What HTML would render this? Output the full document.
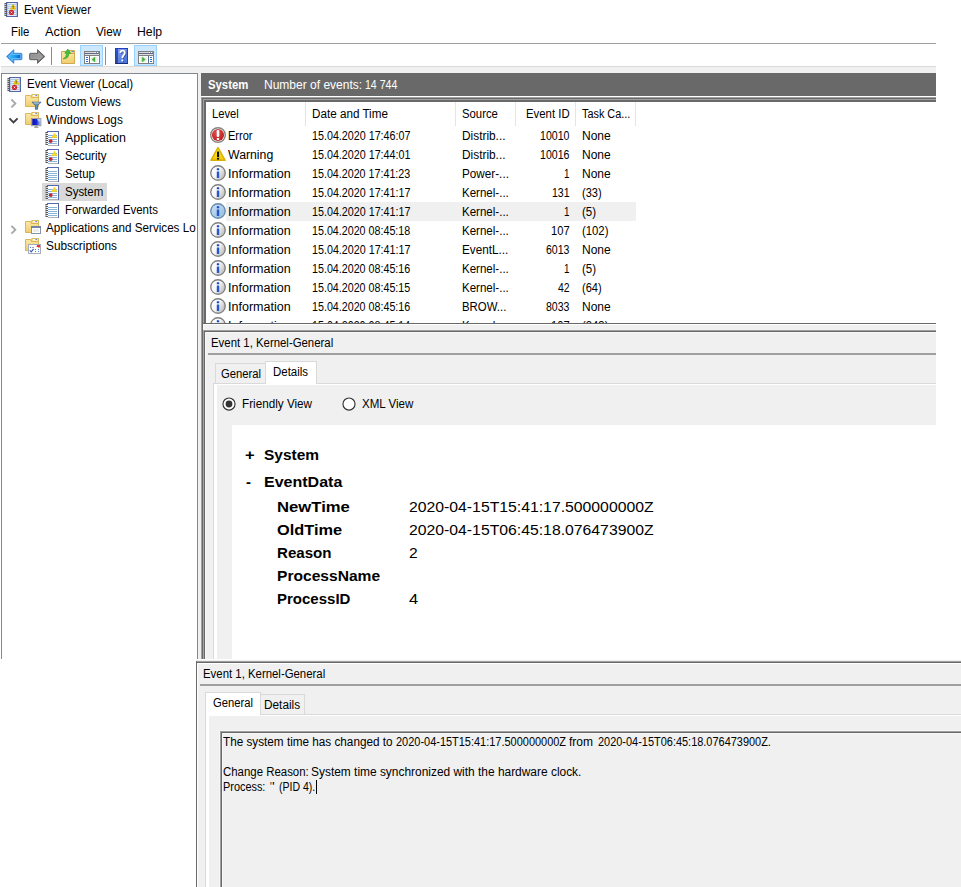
<!DOCTYPE html><html><head><meta charset="utf-8"><title>Event Viewer</title><style>html,body{margin:0;padding:0;background:#fff}
body{width:961px;height:887px;position:relative;overflow:hidden;font-family:"Liberation Sans",sans-serif}
.t{position:absolute;white-space:pre;line-height:30px;height:30px;transform-origin:0 0;color:#000;font-size:12px}
</style></head><body><svg width="0" height="0" style="position:absolute"><defs>
<linearGradient id="gFold" x1="0" y1="0" x2="0" y2="1"><stop offset="0" stop-color="#fbe9a6"/><stop offset="1" stop-color="#f0cd6c"/></linearGradient>
<linearGradient id="gBack" x1="0" y1="0" x2="1" y2="0"><stop offset="0" stop-color="#48b8fa"/><stop offset="0.5" stop-color="#18a0f4"/><stop offset="1" stop-color="#0660c8"/></linearGradient>
<linearGradient id="gFwd" x1="0" y1="0" x2="1" y2="1"><stop offset="0" stop-color="#8a8a8a"/><stop offset="1" stop-color="#a8a8a8"/></linearGradient>
<radialGradient id="gErr" cx="0.4" cy="0.3" r="0.8"><stop offset="0" stop-color="#e05050"/><stop offset="1" stop-color="#b81818"/></radialGradient>
<linearGradient id="gWarn" x1="0" y1="0" x2="0" y2="1"><stop offset="0" stop-color="#fff24a"/><stop offset="1" stop-color="#f2c600"/></linearGradient>
<linearGradient id="gInfo" x1="0" y1="0.2" x2="1" y2="0.8"><stop offset="0" stop-color="#ffffff"/><stop offset="0.45" stop-color="#f6f6f6"/><stop offset="1" stop-color="#b4b4b4"/></linearGradient>
<linearGradient id="gInfoS" x1="0" y1="0" x2="1" y2="1"><stop offset="0" stop-color="#cfe4f6"/><stop offset="1" stop-color="#8fb8dc"/></linearGradient>
<linearGradient id="gHelp" x1="0" y1="0" x2="0.6" y2="1"><stop offset="0" stop-color="#869cee"/><stop offset="0.5" stop-color="#6688e6"/><stop offset="1" stop-color="#4876e0"/></linearGradient><linearGradient id="gHelpS" x1="0" y1="0" x2="0" y2="1"><stop offset="0" stop-color="#2456d6"/><stop offset="1" stop-color="#32488c"/></linearGradient>
<linearGradient id="gMon" x1="0" y1="0" x2="1" y2="0"><stop offset="0" stop-color="#0a0ab8"/><stop offset="0.55" stop-color="#1a2ad8"/><stop offset="1" stop-color="#9cc0f8"/></linearGradient>
</defs></svg><div style="position:absolute;left:1px;top:66px;width:935px;height:593px;background:#f0f0f0;"></div><div style="position:absolute;left:1px;top:43px;width:935px;height:1px;background:#a0a0a0;"></div><div style="position:absolute;left:1px;top:66px;width:935px;height:1px;background:#dadada;"></div><div style="position:absolute;left:80px;top:45px;width:23px;height:21px;background:#cce8ff;box-sizing:border-box;border:1px solid #99d1ff"></div><div style="position:absolute;left:134px;top:45px;width:23px;height:21px;background:#cce8ff;box-sizing:border-box;border:1px solid #99d1ff"></div><div style="position:absolute;left:51px;top:47px;width:1px;height:18px;background:#8c8c8c;"></div><div style="position:absolute;left:105px;top:47px;width:1px;height:18px;background:#8c8c8c;"></div><svg style="position:absolute;left:5.5px;top:49px" width="17" height="15" viewBox="0 0 17 15"><path d="M0.6 7.5 L7.8 0.7 L7.8 4.3 L15 4.3 Q15.9 4.3 15.9 5.2 L15.9 9.8 Q15.9 10.7 15 10.7 L7.8 10.7 L7.8 14.3 Z" fill="#3a94e4" stroke="#2f86dc" stroke-width="0.9" stroke-linejoin="round"/><path d="M2.6 7.5 L6.7 3.6 L6.7 5.5 L14.7 5.5 L14.7 9.5 L6.7 9.5 L6.7 11.4 Z" fill="url(#gBack)" stroke="#86ccfc" stroke-width="0.7" stroke-linejoin="round"/></svg><svg style="position:absolute;left:28.5px;top:49px" width="17" height="15" viewBox="0 0 17 15"><path d="M15.8 7.5 L8.5 0.7 L8.5 4.3 L1.5 4.3 Q0.6 4.3 0.6 5.2 L0.6 9.8 Q0.6 10.7 1.5 10.7 L8.5 10.7 L8.5 14.3 Z" fill="#707070" stroke="#5c5c5c" stroke-width="0.9" stroke-linejoin="round"/><path d="M13.8 7.5 L9.6 3.6 L9.6 5.5 L1.8 5.5 L1.8 9.5 L9.6 9.5 L9.6 11.4 Z" fill="url(#gFwd)" stroke="#a8a8a8" stroke-width="0.7" stroke-linejoin="round"/></svg><svg style="position:absolute;left:61px;top:48px" width="15" height="16" viewBox="0 0 15 16"><path d="M0.5 3.5 L0.5 15.5 L13.5 15.5 L13.5 5.5 L6.5 5.5 L5.5 3.5 Z" fill="url(#gFold)" stroke="#d0a850" stroke-width="1"/><path d="M7.5 2.5 L13.5 2.5 L13.5 5.5 L6.8 5.5 Z" fill="#f5dc90" stroke="#d0a850" stroke-width="1"/><rect x="10.5" y="3" width="2.4" height="1.1" fill="#5a9ae8"/><path d="M2.2 10.8 Q5.6 9.8 5.6 5.2 L3.8 5.2 L6.8 1 L9.6 5.2 L7.8 5.2 Q7.8 10.8 2.2 10.8Z" fill="#3cc43c" stroke="#1f9a24" stroke-width="0.6"/></svg><svg style="position:absolute;left:84px;top:51px" width="16" height="13" viewBox="0 0 16 13"><g shape-rendering="crispEdges"><rect x="0" y="0" width="16" height="13" fill="#808080"/><rect x="1" y="1" width="14" height="1" fill="#d9d9d9"/><rect x="11" y="1" width="1" height="1" fill="#ffffff"/><rect x="13" y="1" width="1" height="1" fill="#ffffff"/><rect x="12" y="1" width="1" height="1" fill="#8a93a8"/><rect x="14" y="1" width="1" height="1" fill="#a0a0a0"/><rect x="1" y="2" width="14" height="1" fill="#5c6b8a"/><rect x="1" y="3" width="14" height="1" fill="#dedede"/><rect x="1" y="5" width="4" height="7" fill="#ffffff"/><rect x="5" y="5" width="1" height="7" fill="#5c6b8a"/><rect x="6" y="5" width="9" height="7" fill="#ffffff"/><rect x="7" y="6" width="7" height="5" fill="#f0f0f0"/><rect x="2" y="6" width="2" height="1" fill="#2f6fc4"/><rect x="2" y="8" width="2" height="1" fill="#2f6fc4"/><rect x="2" y="10" width="2" height="1" fill="#2f6fc4"/></g><path d="M11 6 L11 11 L7.9 8.5 Z" fill="#3cb034" stroke="#3cb034" stroke-width="0.4" stroke-linejoin="round"/></svg><svg style="position:absolute;left:115px;top:48px" width="13" height="16" viewBox="0 0 13 16"><rect x="0" y="0" width="13" height="16" fill="#2442b8"/><rect x="1" y="1" width="2" height="14" fill="url(#gHelpS)"/><rect x="3" y="1" width="9" height="14" fill="url(#gHelp)"/><rect x="0" y="15" width="13" height="1" fill="#1c2c78"/><path d="M5.3 4.9 Q5.4 2.7 7.6 2.7 Q9.8 2.7 9.8 4.8 Q9.8 6.3 8.4 7.5 Q7.3 8.5 7.3 10.2" transform="translate(0.8,0.7)" fill="none" stroke="#28387c" stroke-opacity="0.65" stroke-width="1.8"/><circle cx="8.1" cy="13" r="1.1" fill="#28387c" fill-opacity="0.65"/><path d="M5.3 4.9 Q5.4 2.7 7.6 2.7 Q9.8 2.7 9.8 4.8 Q9.8 6.3 8.4 7.5 Q7.3 8.5 7.3 10.2" fill="none" stroke="#fff" stroke-width="1.75"/><circle cx="7.3" cy="12.5" r="1.1" fill="#fff"/></svg><svg style="position:absolute;left:138px;top:51px" width="16" height="13" viewBox="0 0 16 13"><g shape-rendering="crispEdges"><rect x="0" y="0" width="16" height="13" fill="#808080"/><rect x="1" y="1" width="14" height="1" fill="#d9d9d9"/><rect x="11" y="1" width="1" height="1" fill="#ffffff"/><rect x="13" y="1" width="1" height="1" fill="#ffffff"/><rect x="12" y="1" width="1" height="1" fill="#8a93a8"/><rect x="14" y="1" width="1" height="1" fill="#a0a0a0"/><rect x="1" y="2" width="14" height="1" fill="#5c6b8a"/><rect x="1" y="3" width="14" height="1" fill="#dedede"/><rect x="1" y="5" width="9" height="7" fill="#ffffff"/><rect x="2" y="6" width="7" height="5" fill="#f0f0f0"/><rect x="10" y="5" width="1" height="7" fill="#5c6b8a"/><rect x="11" y="5" width="4" height="7" fill="#ffffff"/><rect x="12" y="6" width="2" height="1" fill="#2f6fc4"/><rect x="12" y="8" width="2" height="1" fill="#2f6fc4"/><rect x="12" y="10" width="2" height="1" fill="#2f6fc4"/></g><path d="M4.2 6 L4.2 11 L7.3 8.5 Z" fill="#3cb034" stroke="#3cb034" stroke-width="0.4" stroke-linejoin="round"/></svg><svg style="position:absolute;left:4px;top:2px" width="14" height="15" viewBox="0 0 14 15"><g shape-rendering="crispEdges"><rect x="2" y="0" width="12" height="15" fill="#5468a8"/><rect x="3" y="1" width="10" height="13" fill="#b4c8ec"/><rect x="4" y="1" width="8" height="1" fill="#e4ecfa"/><rect x="4" y="3" width="8" height="1" fill="#e4ecfa"/><rect x="4" y="5" width="8" height="1" fill="#e4ecfa"/><rect x="4" y="7" width="8" height="1" fill="#e4ecfa"/><rect x="4" y="9" width="8" height="1" fill="#e4ecfa"/><rect x="4" y="11" width="8" height="1" fill="#e4ecfa"/><rect x="4" y="13" width="8" height="1" fill="#e4ecfa"/><rect x="1" y="1" width="2" height="1" fill="#5a5a5a"/><rect x="0" y="1" width="1" height="1" fill="#a4a4a4"/><rect x="0" y="1.0" width="0" height="0" fill="#fff"/><rect x="1" y="3" width="2" height="1" fill="#5a5a5a"/><rect x="0" y="3" width="1" height="1" fill="#a4a4a4"/><rect x="0" y="3.0" width="0" height="0" fill="#fff"/><rect x="1" y="5" width="2" height="1" fill="#5a5a5a"/><rect x="0" y="5" width="1" height="1" fill="#a4a4a4"/><rect x="0" y="5.0" width="0" height="0" fill="#fff"/><rect x="1" y="7" width="2" height="1" fill="#5a5a5a"/><rect x="0" y="7" width="1" height="1" fill="#a4a4a4"/><rect x="0" y="7.0" width="0" height="0" fill="#fff"/><rect x="1" y="9" width="2" height="1" fill="#5a5a5a"/><rect x="0" y="9" width="1" height="1" fill="#a4a4a4"/><rect x="0" y="9.0" width="0" height="0" fill="#fff"/><rect x="1" y="11" width="2" height="1" fill="#5a5a5a"/><rect x="0" y="11" width="1" height="1" fill="#a4a4a4"/><rect x="0" y="11.0" width="0" height="0" fill="#fff"/><rect x="1" y="13" width="2" height="1" fill="#5a5a5a"/><rect x="0" y="13" width="1" height="1" fill="#a4a4a4"/><rect x="0" y="13.0" width="0" height="0" fill="#fff"/><rect x="0" y="2" width="2" height="1" fill="#c4c4c4"/><rect x="0" y="4" width="2" height="1" fill="#c4c4c4"/><rect x="0" y="6" width="2" height="1" fill="#c4c4c4"/><rect x="0" y="8" width="2" height="1" fill="#c4c4c4"/><rect x="0" y="10" width="2" height="1" fill="#c4c4c4"/><rect x="0" y="12" width="2" height="1" fill="#c4c4c4"/></g><path d="M9.1 2.4 L11.8 7.1 L6.5 7.1 Z" fill="#f2d018" stroke="#e8c010" stroke-width="0.9" stroke-linejoin="round"/><rect x="8.7" y="3.7" width="0.9" height="1.6" fill="#3a3a18"/><rect x="8.7" y="5.8" width="0.9" height="0.8" fill="#3a3a18"/><circle cx="7.5" cy="10.4" r="2.55" fill="#cc2028"/><path d="M6.7 9.6 L8.3 11.2 M8.3 9.6 L6.7 11.2" stroke="#fff" stroke-width="0.9"/></svg><div style="position:absolute;left:1px;top:73px;width:197px;height:586px;background:#ffffff;box-sizing:border-box;border:1px solid #828790;border-bottom:none"></div><div style="position:absolute;left:42px;top:183px;width:65px;height:18px;background:#d9d9d9;"></div><svg style="position:absolute;left:7px;top:77px" width="14" height="15" viewBox="0 0 14 15"><g shape-rendering="crispEdges"><rect x="2" y="0" width="12" height="15" fill="#5468a8"/><rect x="3" y="1" width="10" height="13" fill="#b4c8ec"/><rect x="4" y="1" width="8" height="1" fill="#e4ecfa"/><rect x="4" y="3" width="8" height="1" fill="#e4ecfa"/><rect x="4" y="5" width="8" height="1" fill="#e4ecfa"/><rect x="4" y="7" width="8" height="1" fill="#e4ecfa"/><rect x="4" y="9" width="8" height="1" fill="#e4ecfa"/><rect x="4" y="11" width="8" height="1" fill="#e4ecfa"/><rect x="4" y="13" width="8" height="1" fill="#e4ecfa"/><rect x="1" y="1" width="2" height="1" fill="#5a5a5a"/><rect x="0" y="1" width="1" height="1" fill="#a4a4a4"/><rect x="0" y="1.0" width="0" height="0" fill="#fff"/><rect x="1" y="3" width="2" height="1" fill="#5a5a5a"/><rect x="0" y="3" width="1" height="1" fill="#a4a4a4"/><rect x="0" y="3.0" width="0" height="0" fill="#fff"/><rect x="1" y="5" width="2" height="1" fill="#5a5a5a"/><rect x="0" y="5" width="1" height="1" fill="#a4a4a4"/><rect x="0" y="5.0" width="0" height="0" fill="#fff"/><rect x="1" y="7" width="2" height="1" fill="#5a5a5a"/><rect x="0" y="7" width="1" height="1" fill="#a4a4a4"/><rect x="0" y="7.0" width="0" height="0" fill="#fff"/><rect x="1" y="9" width="2" height="1" fill="#5a5a5a"/><rect x="0" y="9" width="1" height="1" fill="#a4a4a4"/><rect x="0" y="9.0" width="0" height="0" fill="#fff"/><rect x="1" y="11" width="2" height="1" fill="#5a5a5a"/><rect x="0" y="11" width="1" height="1" fill="#a4a4a4"/><rect x="0" y="11.0" width="0" height="0" fill="#fff"/><rect x="1" y="13" width="2" height="1" fill="#5a5a5a"/><rect x="0" y="13" width="1" height="1" fill="#a4a4a4"/><rect x="0" y="13.0" width="0" height="0" fill="#fff"/><rect x="0" y="2" width="2" height="1" fill="#c4c4c4"/><rect x="0" y="4" width="2" height="1" fill="#c4c4c4"/><rect x="0" y="6" width="2" height="1" fill="#c4c4c4"/><rect x="0" y="8" width="2" height="1" fill="#c4c4c4"/><rect x="0" y="10" width="2" height="1" fill="#c4c4c4"/><rect x="0" y="12" width="2" height="1" fill="#c4c4c4"/></g><path d="M9.1 2.4 L11.8 7.1 L6.5 7.1 Z" fill="#f2d018" stroke="#e8c010" stroke-width="0.9" stroke-linejoin="round"/><rect x="8.7" y="3.7" width="0.9" height="1.6" fill="#3a3a18"/><rect x="8.7" y="5.8" width="0.9" height="0.8" fill="#3a3a18"/><circle cx="7.5" cy="10.4" r="2.55" fill="#cc2028"/><path d="M6.7 9.6 L8.3 11.2 M8.3 9.6 L6.7 11.2" stroke="#fff" stroke-width="0.9"/></svg><svg style="position:absolute;left:25px;top:94px" width="17" height="17" viewBox="0 0 17 17"><path d="M0.5 1.5 L0.5 12.5 L13.5 12.5 L13.5 3.5 L6.5 3.5 L5.5 1.5 Z" fill="url(#gFold)" stroke="#d9b65a" stroke-width="1"/><path d="M6.8 0.5 L13.5 0.5 L13.5 3.5 L6.5 3.5 Z" fill="#f7e3a0" stroke="#d9b65a" stroke-width="1"/><rect x="8" y="0.9" width="4.5" height="1.4" fill="#ffffff"/><rect x="10.3" y="1.1" width="1.8" height="0.9" fill="#3f8ee8"/><path d="M7 8.2 L16 8.2 L12.6 11.6 L12.6 15.2 L10.4 15.2 L10.4 11.6 Z" fill="#6a90b8" stroke="#44668e" stroke-width="0.9"/><path d="M8.6 9 L14.4 9" stroke="#cfe0f0" stroke-width="0.8"/></svg><svg style="position:absolute;left:25px;top:112px" width="17" height="17" viewBox="0 0 17 17"><path d="M0.5 1.5 L0.5 12.5 L13.5 12.5 L13.5 3.5 L6.5 3.5 L5.5 1.5 Z" fill="url(#gFold)" stroke="#d9b65a" stroke-width="1"/><path d="M6.8 0.5 L13.5 0.5 L13.5 3.5 L6.5 3.5 Z" fill="#f7e3a0" stroke="#d9b65a" stroke-width="1"/><rect x="8" y="0.9" width="4.5" height="1.4" fill="#ffffff"/><rect x="10.3" y="1.1" width="1.8" height="0.9" fill="#3f8ee8"/><rect x="6.5" y="6.3" width="9.5" height="7.6" fill="#b8b8b8" stroke="#8a8a8a" stroke-width="0.6"/><rect x="7.3" y="7" width="8" height="6" fill="url(#gMon)"/><path d="M12 7 L15.3 7 L15.3 10 Q13 10 12 7Z" fill="#b8d4fa" opacity="0.9"/><path d="M9.2 15.4 L13.4 15.4 M10.2 14.4 L12.4 14.4" stroke="#8a8a8a" stroke-width="0.9"/></svg><svg style="position:absolute;left:45px;top:131px" width="14" height="15" viewBox="0 0 14 15"><g shape-rendering="crispEdges"><rect x="3" y="1" width="10" height="13" fill="#ffffff"/><rect x="2" y="0" width="12" height="1" fill="#5468b0"/><rect x="13" y="0" width="1" height="15" fill="#5a6aa8"/><rect x="3" y="14" width="10" height="1" fill="#aeb2bc"/><rect x="3" y="4" width="9" height="1" fill="#8ab4d8"/><rect x="3" y="6" width="9" height="1" fill="#8ab4d8"/><rect x="3" y="8" width="9" height="1" fill="#8ab4d8"/><rect x="3" y="10" width="9" height="1" fill="#8ab4d8"/><rect x="3" y="12" width="9" height="1" fill="#8ab4d8"/><rect x="1" y="1" width="2" height="1" fill="#5a5a5a"/><rect x="0" y="1" width="1" height="1" fill="#a4a4a4"/><rect x="0" y="1.0" width="0" height="0" fill="#fff"/><rect x="1" y="3" width="2" height="1" fill="#5a5a5a"/><rect x="0" y="3" width="1" height="1" fill="#a4a4a4"/><rect x="0" y="3.0" width="0" height="0" fill="#fff"/><rect x="1" y="5" width="2" height="1" fill="#5a5a5a"/><rect x="0" y="5" width="1" height="1" fill="#a4a4a4"/><rect x="0" y="5.0" width="0" height="0" fill="#fff"/><rect x="1" y="7" width="2" height="1" fill="#5a5a5a"/><rect x="0" y="7" width="1" height="1" fill="#a4a4a4"/><rect x="0" y="7.0" width="0" height="0" fill="#fff"/><rect x="1" y="9" width="2" height="1" fill="#5a5a5a"/><rect x="0" y="9" width="1" height="1" fill="#a4a4a4"/><rect x="0" y="9.0" width="0" height="0" fill="#fff"/><rect x="1" y="11" width="2" height="1" fill="#5a5a5a"/><rect x="0" y="11" width="1" height="1" fill="#a4a4a4"/><rect x="0" y="11.0" width="0" height="0" fill="#fff"/><rect x="1" y="13" width="2" height="1" fill="#5a5a5a"/><rect x="0" y="13" width="1" height="1" fill="#a4a4a4"/><rect x="0" y="13.0" width="0" height="0" fill="#fff"/><rect x="0" y="2" width="2" height="1" fill="#c4c4c4"/><rect x="0" y="4" width="2" height="1" fill="#c4c4c4"/><rect x="0" y="6" width="2" height="1" fill="#c4c4c4"/><rect x="0" y="8" width="2" height="1" fill="#c4c4c4"/><rect x="0" y="10" width="2" height="1" fill="#c4c4c4"/><rect x="0" y="12" width="2" height="1" fill="#c4c4c4"/></g><path d="M9.5 2.3 L11.9 6.6 L7.1 6.6 Z" fill="#f8dc28" stroke="#f2d020" stroke-width="0.8" stroke-linejoin="round"/><circle cx="5.75" cy="10.05" r="1.9" fill="#c8242c"/></svg><svg style="position:absolute;left:45px;top:149px" width="14" height="15" viewBox="0 0 14 15"><g shape-rendering="crispEdges"><rect x="3" y="1" width="10" height="13" fill="#ffffff"/><rect x="2" y="0" width="12" height="1" fill="#5468b0"/><rect x="13" y="0" width="1" height="15" fill="#5a6aa8"/><rect x="3" y="14" width="10" height="1" fill="#aeb2bc"/><rect x="3" y="4" width="9" height="1" fill="#8ab4d8"/><rect x="3" y="6" width="9" height="1" fill="#8ab4d8"/><rect x="3" y="8" width="9" height="1" fill="#8ab4d8"/><rect x="3" y="10" width="9" height="1" fill="#8ab4d8"/><rect x="3" y="12" width="9" height="1" fill="#8ab4d8"/><rect x="1" y="1" width="2" height="1" fill="#5a5a5a"/><rect x="0" y="1" width="1" height="1" fill="#a4a4a4"/><rect x="0" y="1.0" width="0" height="0" fill="#fff"/><rect x="1" y="3" width="2" height="1" fill="#5a5a5a"/><rect x="0" y="3" width="1" height="1" fill="#a4a4a4"/><rect x="0" y="3.0" width="0" height="0" fill="#fff"/><rect x="1" y="5" width="2" height="1" fill="#5a5a5a"/><rect x="0" y="5" width="1" height="1" fill="#a4a4a4"/><rect x="0" y="5.0" width="0" height="0" fill="#fff"/><rect x="1" y="7" width="2" height="1" fill="#5a5a5a"/><rect x="0" y="7" width="1" height="1" fill="#a4a4a4"/><rect x="0" y="7.0" width="0" height="0" fill="#fff"/><rect x="1" y="9" width="2" height="1" fill="#5a5a5a"/><rect x="0" y="9" width="1" height="1" fill="#a4a4a4"/><rect x="0" y="9.0" width="0" height="0" fill="#fff"/><rect x="1" y="11" width="2" height="1" fill="#5a5a5a"/><rect x="0" y="11" width="1" height="1" fill="#a4a4a4"/><rect x="0" y="11.0" width="0" height="0" fill="#fff"/><rect x="1" y="13" width="2" height="1" fill="#5a5a5a"/><rect x="0" y="13" width="1" height="1" fill="#a4a4a4"/><rect x="0" y="13.0" width="0" height="0" fill="#fff"/><rect x="0" y="2" width="2" height="1" fill="#c4c4c4"/><rect x="0" y="4" width="2" height="1" fill="#c4c4c4"/><rect x="0" y="6" width="2" height="1" fill="#c4c4c4"/><rect x="0" y="8" width="2" height="1" fill="#c4c4c4"/><rect x="0" y="10" width="2" height="1" fill="#c4c4c4"/><rect x="0" y="12" width="2" height="1" fill="#c4c4c4"/></g><path d="M9.5 2.3 L11.9 6.6 L7.1 6.6 Z" fill="#f8dc28" stroke="#f2d020" stroke-width="0.8" stroke-linejoin="round"/><circle cx="5.75" cy="10.05" r="1.9" fill="#c8242c"/></svg><svg style="position:absolute;left:45px;top:167px" width="14" height="15" viewBox="0 0 14 15"><g shape-rendering="crispEdges"><rect x="3" y="1" width="10" height="13" fill="#ffffff"/><rect x="2" y="0" width="12" height="1" fill="#5468b0"/><rect x="13" y="0" width="1" height="15" fill="#5a6aa8"/><rect x="3" y="14" width="10" height="1" fill="#aeb2bc"/><rect x="3" y="4" width="9" height="1" fill="#8ab4d8"/><rect x="3" y="6" width="9" height="1" fill="#8ab4d8"/><rect x="3" y="8" width="9" height="1" fill="#8ab4d8"/><rect x="3" y="10" width="9" height="1" fill="#8ab4d8"/><rect x="3" y="12" width="9" height="1" fill="#8ab4d8"/><rect x="1" y="1" width="2" height="1" fill="#5a5a5a"/><rect x="0" y="1" width="1" height="1" fill="#a4a4a4"/><rect x="0" y="1.0" width="0" height="0" fill="#fff"/><rect x="1" y="3" width="2" height="1" fill="#5a5a5a"/><rect x="0" y="3" width="1" height="1" fill="#a4a4a4"/><rect x="0" y="3.0" width="0" height="0" fill="#fff"/><rect x="1" y="5" width="2" height="1" fill="#5a5a5a"/><rect x="0" y="5" width="1" height="1" fill="#a4a4a4"/><rect x="0" y="5.0" width="0" height="0" fill="#fff"/><rect x="1" y="7" width="2" height="1" fill="#5a5a5a"/><rect x="0" y="7" width="1" height="1" fill="#a4a4a4"/><rect x="0" y="7.0" width="0" height="0" fill="#fff"/><rect x="1" y="9" width="2" height="1" fill="#5a5a5a"/><rect x="0" y="9" width="1" height="1" fill="#a4a4a4"/><rect x="0" y="9.0" width="0" height="0" fill="#fff"/><rect x="1" y="11" width="2" height="1" fill="#5a5a5a"/><rect x="0" y="11" width="1" height="1" fill="#a4a4a4"/><rect x="0" y="11.0" width="0" height="0" fill="#fff"/><rect x="1" y="13" width="2" height="1" fill="#5a5a5a"/><rect x="0" y="13" width="1" height="1" fill="#a4a4a4"/><rect x="0" y="13.0" width="0" height="0" fill="#fff"/><rect x="0" y="2" width="2" height="1" fill="#c4c4c4"/><rect x="0" y="4" width="2" height="1" fill="#c4c4c4"/><rect x="0" y="6" width="2" height="1" fill="#c4c4c4"/><rect x="0" y="8" width="2" height="1" fill="#c4c4c4"/><rect x="0" y="10" width="2" height="1" fill="#c4c4c4"/><rect x="0" y="12" width="2" height="1" fill="#c4c4c4"/></g></svg><svg style="position:absolute;left:45px;top:185px" width="14" height="15" viewBox="0 0 14 15"><g shape-rendering="crispEdges"><rect x="3" y="1" width="10" height="13" fill="#ffffff"/><rect x="2" y="0" width="12" height="1" fill="#5468b0"/><rect x="13" y="0" width="1" height="15" fill="#5a6aa8"/><rect x="3" y="14" width="10" height="1" fill="#aeb2bc"/><rect x="3" y="4" width="9" height="1" fill="#8ab4d8"/><rect x="3" y="6" width="9" height="1" fill="#8ab4d8"/><rect x="3" y="8" width="9" height="1" fill="#8ab4d8"/><rect x="3" y="10" width="9" height="1" fill="#8ab4d8"/><rect x="3" y="12" width="9" height="1" fill="#8ab4d8"/><rect x="1" y="1" width="2" height="1" fill="#5a5a5a"/><rect x="0" y="1" width="1" height="1" fill="#a4a4a4"/><rect x="0" y="1.0" width="0" height="0" fill="#fff"/><rect x="1" y="3" width="2" height="1" fill="#5a5a5a"/><rect x="0" y="3" width="1" height="1" fill="#a4a4a4"/><rect x="0" y="3.0" width="0" height="0" fill="#fff"/><rect x="1" y="5" width="2" height="1" fill="#5a5a5a"/><rect x="0" y="5" width="1" height="1" fill="#a4a4a4"/><rect x="0" y="5.0" width="0" height="0" fill="#fff"/><rect x="1" y="7" width="2" height="1" fill="#5a5a5a"/><rect x="0" y="7" width="1" height="1" fill="#a4a4a4"/><rect x="0" y="7.0" width="0" height="0" fill="#fff"/><rect x="1" y="9" width="2" height="1" fill="#5a5a5a"/><rect x="0" y="9" width="1" height="1" fill="#a4a4a4"/><rect x="0" y="9.0" width="0" height="0" fill="#fff"/><rect x="1" y="11" width="2" height="1" fill="#5a5a5a"/><rect x="0" y="11" width="1" height="1" fill="#a4a4a4"/><rect x="0" y="11.0" width="0" height="0" fill="#fff"/><rect x="1" y="13" width="2" height="1" fill="#5a5a5a"/><rect x="0" y="13" width="1" height="1" fill="#a4a4a4"/><rect x="0" y="13.0" width="0" height="0" fill="#fff"/><rect x="0" y="2" width="2" height="1" fill="#c4c4c4"/><rect x="0" y="4" width="2" height="1" fill="#c4c4c4"/><rect x="0" y="6" width="2" height="1" fill="#c4c4c4"/><rect x="0" y="8" width="2" height="1" fill="#c4c4c4"/><rect x="0" y="10" width="2" height="1" fill="#c4c4c4"/><rect x="0" y="12" width="2" height="1" fill="#c4c4c4"/></g><path d="M9.5 2.3 L11.9 6.6 L7.1 6.6 Z" fill="#f8dc28" stroke="#f2d020" stroke-width="0.8" stroke-linejoin="round"/><circle cx="5.75" cy="10.05" r="1.9" fill="#c8242c"/></svg><svg style="position:absolute;left:45px;top:203px" width="14" height="15" viewBox="0 0 14 15"><g shape-rendering="crispEdges"><rect x="3" y="1" width="10" height="13" fill="#ffffff"/><rect x="2" y="0" width="12" height="1" fill="#5468b0"/><rect x="13" y="0" width="1" height="15" fill="#5a6aa8"/><rect x="3" y="14" width="10" height="1" fill="#aeb2bc"/><rect x="3" y="4" width="9" height="1" fill="#8ab4d8"/><rect x="3" y="6" width="9" height="1" fill="#8ab4d8"/><rect x="3" y="8" width="9" height="1" fill="#8ab4d8"/><rect x="3" y="10" width="9" height="1" fill="#8ab4d8"/><rect x="3" y="12" width="9" height="1" fill="#8ab4d8"/><rect x="1" y="1" width="2" height="1" fill="#5a5a5a"/><rect x="0" y="1" width="1" height="1" fill="#a4a4a4"/><rect x="0" y="1.0" width="0" height="0" fill="#fff"/><rect x="1" y="3" width="2" height="1" fill="#5a5a5a"/><rect x="0" y="3" width="1" height="1" fill="#a4a4a4"/><rect x="0" y="3.0" width="0" height="0" fill="#fff"/><rect x="1" y="5" width="2" height="1" fill="#5a5a5a"/><rect x="0" y="5" width="1" height="1" fill="#a4a4a4"/><rect x="0" y="5.0" width="0" height="0" fill="#fff"/><rect x="1" y="7" width="2" height="1" fill="#5a5a5a"/><rect x="0" y="7" width="1" height="1" fill="#a4a4a4"/><rect x="0" y="7.0" width="0" height="0" fill="#fff"/><rect x="1" y="9" width="2" height="1" fill="#5a5a5a"/><rect x="0" y="9" width="1" height="1" fill="#a4a4a4"/><rect x="0" y="9.0" width="0" height="0" fill="#fff"/><rect x="1" y="11" width="2" height="1" fill="#5a5a5a"/><rect x="0" y="11" width="1" height="1" fill="#a4a4a4"/><rect x="0" y="11.0" width="0" height="0" fill="#fff"/><rect x="1" y="13" width="2" height="1" fill="#5a5a5a"/><rect x="0" y="13" width="1" height="1" fill="#a4a4a4"/><rect x="0" y="13.0" width="0" height="0" fill="#fff"/><rect x="0" y="2" width="2" height="1" fill="#c4c4c4"/><rect x="0" y="4" width="2" height="1" fill="#c4c4c4"/><rect x="0" y="6" width="2" height="1" fill="#c4c4c4"/><rect x="0" y="8" width="2" height="1" fill="#c4c4c4"/><rect x="0" y="10" width="2" height="1" fill="#c4c4c4"/><rect x="0" y="12" width="2" height="1" fill="#c4c4c4"/></g></svg><svg style="position:absolute;left:25px;top:220px" width="17" height="17" viewBox="0 0 17 17"><path d="M0.5 1.5 L0.5 12.5 L13.5 12.5 L13.5 3.5 L6.5 3.5 L5.5 1.5 Z" fill="url(#gFold)" stroke="#d9b65a" stroke-width="1"/><path d="M6.8 0.5 L13.5 0.5 L13.5 3.5 L6.5 3.5 Z" fill="#f7e3a0" stroke="#d9b65a" stroke-width="1"/><rect x="8" y="0.9" width="4.5" height="1.4" fill="#ffffff"/><rect x="10.3" y="1.1" width="1.8" height="0.9" fill="#3f8ee8"/><g shape-rendering="crispEdges"><rect x="6" y="6" width="10" height="8" fill="#8a92a4"/><rect x="7" y="8" width="8" height="5" fill="#ffffff"/><rect x="8" y="9" width="6" height="3" fill="#ececec"/><rect x="6" y="6" width="10" height="2" fill="#7484a4"/></g></svg><svg style="position:absolute;left:25px;top:238px" width="17" height="17" viewBox="0 0 17 17"><path d="M0.5 1.5 L0.5 12.5 L13.5 12.5 L13.5 3.5 L6.5 3.5 L5.5 1.5 Z" fill="url(#gFold)" stroke="#d9b65a" stroke-width="1"/><path d="M6.8 0.5 L13.5 0.5 L13.5 3.5 L6.5 3.5 Z" fill="#f7e3a0" stroke="#d9b65a" stroke-width="1"/><rect x="8" y="0.9" width="4.5" height="1.4" fill="#ffffff"/><rect x="10.3" y="1.1" width="1.8" height="0.9" fill="#3f8ee8"/><g shape-rendering="crispEdges"><rect x="3" y="6" width="13" height="10" fill="#a8acb8"/><rect x="4" y="7" width="11" height="8" fill="#ffffff"/><rect x="12" y="7" width="3" height="2" fill="#e83038"/><rect x="11" y="8" width="1" height="1" fill="#f0a0a0"/><rect x="13" y="9" width="2" height="1" fill="#f0a0a0"/><rect x="5" y="9" width="1" height="1" fill="#3c78c8"/><rect x="7" y="9" width="2" height="1" fill="#9aa0b0"/><rect x="10" y="11" width="1" height="1" fill="#3c78c8"/><rect x="13" y="11" width="1" height="1" fill="#3c78c8"/><rect x="10" y="13" width="1" height="1" fill="#3c78c8"/><rect x="13" y="13" width="1" height="1" fill="#3c78c8"/></g><path d="M4.8 12.3 L6.3 13.9 L8.6 10.8" stroke="#2a60c0" stroke-width="1.1" fill="none"/></svg><svg style="position:absolute;left:9px;top:98px" width="9" height="11" viewBox="0 0 9 11"><path d="M2.4 1.5 L6.4 5.4 L2.4 9.3" fill="none" stroke="#a6a6a6" stroke-width="1.8"/></svg><svg style="position:absolute;left:8px;top:116px" width="11" height="9" viewBox="0 0 11 9"><path d="M1.4 2.3 L5.5 6.4 L9.6 2.3" fill="none" stroke="#404040" stroke-width="1.9"/></svg><svg style="position:absolute;left:9px;top:224px" width="9" height="11" viewBox="0 0 9 11"><path d="M2.4 1.9 L6.4 5.8 L2.4 9.7" fill="none" stroke="#a6a6a6" stroke-width="1.8"/></svg><div style="position:absolute;left:201px;top:73px;width:735px;height:23px;background:#696969;"></div><div style="position:absolute;left:201px;top:96px;width:735px;height:1px;background:#ffffff;"></div><div style="position:absolute;left:201px;top:97px;width:1px;height:562px;background:#a0a0a0;"></div><div style="position:absolute;left:202px;top:98px;width:1px;height:561px;background:#696969;"></div><div style="position:absolute;left:201px;top:97px;width:735px;height:1px;background:#a0a0a0;"></div><div style="position:absolute;left:202px;top:98px;width:734px;height:1px;background:#696969;"></div><div style="position:absolute;left:203px;top:99px;width:733px;height:225px;background:#696969;"></div><div style="position:absolute;left:203px;top:99px;width:733px;height:1px;background:#a0a0a0;"></div><div style="position:absolute;left:203px;top:99px;width:1px;height:224px;background:#a0a0a0;"></div><div style="position:absolute;left:206px;top:102px;width:730px;height:221px;background:#ffffff;"></div><div style="position:absolute;left:226px;top:202px;width:410px;height:19px;background:#f0f0f0;"></div><div style="position:absolute;left:305px;top:102px;width:1px;height:24px;background:#e5e5e5;"></div><div style="position:absolute;left:455px;top:102px;width:1px;height:24px;background:#e5e5e5;"></div><div style="position:absolute;left:515px;top:102px;width:1px;height:24px;background:#e5e5e5;"></div><div style="position:absolute;left:575px;top:102px;width:1px;height:24px;background:#e5e5e5;"></div><div style="position:absolute;left:635px;top:102px;width:1px;height:24px;background:#e5e5e5;"></div><svg style="position:absolute;left:210px;top:127px" width="16" height="16" viewBox="0 0 16 16"><circle cx="8" cy="8" r="7.3" fill="#fff" stroke="#858585" stroke-width="1.4"/><circle cx="8" cy="8" r="6.1" fill="url(#gErr)"/><rect x="6.7" y="2.9" width="2.6" height="7" rx="0.8" fill="#fff"/><rect x="6.8" y="10.9" width="2.4" height="2.1" rx="0.5" fill="#fff"/></svg><svg style="position:absolute;left:210px;top:146px" width="16" height="16" viewBox="0 0 16 16"><path d="M8 1.6 L15.1 14.3 L0.9 14.3 Z" fill="url(#gWarn)" stroke="#dcb000" stroke-width="1.5" stroke-linejoin="round"/><rect x="7" y="5.6" width="2.1" height="5.3" rx="0.5" fill="#101010"/><rect x="7" y="11.8" width="2.1" height="1.8" fill="#101010"/></svg><svg style="position:absolute;left:210px;top:165px" width="16" height="16" viewBox="0 0 16 16"><circle cx="8" cy="8" r="7.25" fill="url(#gInfo)" stroke="#808080" stroke-width="1.35"/><rect x="6.8" y="3.3" width="2.4" height="2" rx="0.4" fill="#1a48c4"/><rect x="6.8" y="6.4" width="2.4" height="6.6" rx="0.3" fill="#2456cc"/></svg><svg style="position:absolute;left:210px;top:184px" width="16" height="16" viewBox="0 0 16 16"><circle cx="8" cy="8" r="7.25" fill="url(#gInfo)" stroke="#808080" stroke-width="1.35"/><rect x="6.8" y="3.3" width="2.4" height="2" rx="0.4" fill="#1a48c4"/><rect x="6.8" y="6.4" width="2.4" height="6.6" rx="0.3" fill="#2456cc"/></svg><svg style="position:absolute;left:210px;top:203px" width="16" height="16" viewBox="0 0 16 16"><circle cx="8" cy="8" r="7.25" fill="url(#gInfoS)" stroke="#6688ae" stroke-width="1.35"/><rect x="6.8" y="3.3" width="2.4" height="2" rx="0.4" fill="#1a48c4"/><rect x="6.8" y="6.4" width="2.4" height="6.6" rx="0.3" fill="#2456cc"/></svg><svg style="position:absolute;left:210px;top:222px" width="16" height="16" viewBox="0 0 16 16"><circle cx="8" cy="8" r="7.25" fill="url(#gInfo)" stroke="#808080" stroke-width="1.35"/><rect x="6.8" y="3.3" width="2.4" height="2" rx="0.4" fill="#1a48c4"/><rect x="6.8" y="6.4" width="2.4" height="6.6" rx="0.3" fill="#2456cc"/></svg><svg style="position:absolute;left:210px;top:241px" width="16" height="16" viewBox="0 0 16 16"><circle cx="8" cy="8" r="7.25" fill="url(#gInfo)" stroke="#808080" stroke-width="1.35"/><rect x="6.8" y="3.3" width="2.4" height="2" rx="0.4" fill="#1a48c4"/><rect x="6.8" y="6.4" width="2.4" height="6.6" rx="0.3" fill="#2456cc"/></svg><svg style="position:absolute;left:210px;top:260px" width="16" height="16" viewBox="0 0 16 16"><circle cx="8" cy="8" r="7.25" fill="url(#gInfo)" stroke="#808080" stroke-width="1.35"/><rect x="6.8" y="3.3" width="2.4" height="2" rx="0.4" fill="#1a48c4"/><rect x="6.8" y="6.4" width="2.4" height="6.6" rx="0.3" fill="#2456cc"/></svg><svg style="position:absolute;left:210px;top:279px" width="16" height="16" viewBox="0 0 16 16"><circle cx="8" cy="8" r="7.25" fill="url(#gInfo)" stroke="#808080" stroke-width="1.35"/><rect x="6.8" y="3.3" width="2.4" height="2" rx="0.4" fill="#1a48c4"/><rect x="6.8" y="6.4" width="2.4" height="6.6" rx="0.3" fill="#2456cc"/></svg><svg style="position:absolute;left:210px;top:298px" width="16" height="16" viewBox="0 0 16 16"><circle cx="8" cy="8" r="7.25" fill="url(#gInfo)" stroke="#808080" stroke-width="1.35"/><rect x="6.8" y="3.3" width="2.4" height="2" rx="0.4" fill="#1a48c4"/><rect x="6.8" y="6.4" width="2.4" height="6.6" rx="0.3" fill="#2456cc"/></svg><div style="position:absolute;left:206px;top:102px;width:730px;height:221px;overflow:hidden"><div style="position:absolute;left:-206px;top:-102px"><svg style="position:absolute;left:210px;top:317px" width="16" height="16" viewBox="0 0 16 16"><circle cx="8" cy="8" r="7.25" fill="url(#gInfo)" stroke="#808080" stroke-width="1.35"/><rect x="6.8" y="3.3" width="2.4" height="2" rx="0.4" fill="#1a48c4"/><rect x="6.8" y="6.4" width="2.4" height="6.6" rx="0.3" fill="#2456cc"/></svg><div class="t" style="left:228.00px;top:311.00px;font-size:12px;transform:scaleX(1.0447)">Information</div><div class="t" style="left:312.00px;top:311.00px;font-size:12px;transform:scaleX(0.8920)">15.04.2020 08:45:14</div><div class="t" style="left:462.00px;top:311.00px;font-size:12px;transform:scaleX(0.9613)">Kernel-...</div><div class="t" style="left:551.00px;top:311.00px;font-size:12px;transform:scaleX(0.9282)">107</div><div class="t" style="left:582.00px;top:311.00px;font-size:12px;transform:scaleX(0.9431)">(243)</div></div></div><div style="position:absolute;left:203px;top:324px;width:733px;height:6px;background:#f0f0f0;"></div><div style="position:absolute;left:203px;top:324px;width:733px;height:1px;background:#ffffff;"></div><div style="position:absolute;left:203px;top:324px;width:1px;height:6px;background:#f8f8f8;"></div><div style="position:absolute;left:203px;top:330px;width:733px;height:1px;background:#a0a0a0;"></div><div style="position:absolute;left:203px;top:330px;width:1px;height:329px;background:#a0a0a0;"></div><div style="position:absolute;left:204px;top:331px;width:732px;height:1px;background:#696969;"></div><div style="position:absolute;left:204px;top:331px;width:1px;height:328px;background:#696969;"></div><div style="position:absolute;left:205px;top:332px;width:731px;height:1px;background:#f8f8f8;"></div><div style="position:absolute;left:205px;top:332px;width:1px;height:327px;background:#f8f8f8;"></div><div style="position:absolute;left:208px;top:353px;width:728px;height:2px;background:#a0a0a0;"></div><div style="position:absolute;left:213px;top:383px;width:723px;height:276px;background:#ffffff;box-sizing:border-box;border-left:1px solid #d9d9d9;border-top:1px solid #d9d9d9"></div><div style="position:absolute;left:217px;top:385px;width:719px;height:274px;background:#f0f0f0;"></div><div style="position:absolute;left:215px;top:363px;width:51px;height:20px;background:#f0f0f0;box-sizing:border-box;border:1px solid #d9d9d9;border-bottom:none"></div><div style="position:absolute;left:265px;top:361px;width:52px;height:23px;background:#ffffff;box-sizing:border-box;border:1px solid #d9d9d9;border-bottom:none"></div><svg style="position:absolute;left:222px;top:397px" width="14" height="14" viewBox="0 0 14 14"><circle cx="7" cy="7" r="6.05" fill="#fff" stroke="#333" stroke-width="1.15"/><circle cx="7" cy="7" r="3.4" fill="#333"/></svg><svg style="position:absolute;left:342px;top:397px" width="14" height="14" viewBox="0 0 14 14"><circle cx="7" cy="7" r="6.05" fill="#fff" stroke="#333" stroke-width="1.15"/></svg><div style="position:absolute;left:232px;top:425px;width:704px;height:234px;background:#ffffff;"></div><div style="position:absolute;left:196px;top:660px;width:765px;height:227px;background:#f0f0f0;"></div><div style="position:absolute;left:196px;top:661px;width:765px;height:1px;background:#a0a0a0;"></div><div style="position:absolute;left:196px;top:662px;width:765px;height:1px;background:#696969;"></div><div style="position:absolute;left:196px;top:661px;width:1px;height:226px;background:#696969;"></div><div style="position:absolute;left:197px;top:663px;width:764px;height:1px;background:#ffffff;"></div><div style="position:absolute;left:197px;top:663px;width:1px;height:224px;background:#ffffff;"></div><div style="position:absolute;left:200px;top:684px;width:761px;height:2px;background:#a0a0a0;"></div><div style="position:absolute;left:205px;top:714px;width:756px;height:173px;background:#ffffff;box-sizing:border-box;border-left:1px solid #d9d9d9;border-top:1px solid #d9d9d9"></div><div style="position:absolute;left:209px;top:716px;width:752px;height:171px;background:#f0f0f0;"></div><div style="position:absolute;left:260px;top:694px;width:45px;height:20px;background:#f0f0f0;box-sizing:border-box;border:1px solid #d9d9d9;border-bottom:none"></div><div style="position:absolute;left:205px;top:692px;width:56px;height:23px;background:#ffffff;box-sizing:border-box;border:1px solid #d9d9d9;border-bottom:none"></div><div style="position:absolute;left:219px;top:730px;width:742px;height:157px;background:#f0f0f0;box-sizing:border-box;border-left:1px solid #f5f5f5;border-top:1px solid #f5f5f5"></div><div style="position:absolute;left:220px;top:731px;width:741px;height:156px;background:#f0f0f0;box-sizing:border-box;border-left:1px solid #a0a0a0;border-top:1px solid #a0a0a0"></div><div style="position:absolute;left:221px;top:732px;width:740px;height:155px;background:#f0f0f0;box-sizing:border-box;border-left:1px solid #696969;border-top:1px solid #696969"></div><div style="position:absolute;left:222px;top:733px;width:739px;height:154px;background:#f0f0f0;box-sizing:border-box;border-left:1px solid #f7f7f7;border-top:1px solid #f7f7f7"></div><div style="position:absolute;left:316px;top:780px;width:1px;height:14px;background:#000;"></div><div class="t" style="left:24.00px;top:-5.00px;font-size:12px;transform:scaleX(0.9495)">Event Viewer</div><div class="t" style="left:11.00px;top:17.00px;font-size:12px;transform:scaleX(0.9474)">File</div><div class="t" style="left:45.00px;top:17.00px;font-size:12px;transform:scaleX(1.0687)">Action</div><div class="t" style="left:96.00px;top:17.00px;font-size:12px;transform:scaleX(0.9786)">View</div><div class="t" style="left:137.00px;top:17.00px;font-size:12px;transform:scaleX(1.0186)">Help</div><div class="t" style="left:27.00px;top:69.00px;font-size:12px;transform:scaleX(0.9595)">Event Viewer (Local)</div><div class="t" style="left:46.00px;top:87.00px;font-size:12px;transform:scaleX(0.9789)">Custom Views</div><div class="t" style="left:46.00px;top:105.00px;font-size:12px;transform:scaleX(0.9839)">Windows Logs</div><div class="t" style="left:65.00px;top:123.00px;font-size:12px;transform:scaleX(1.0379)">Application</div><div class="t" style="left:65.00px;top:141.00px;font-size:12px;transform:scaleX(0.9549)">Security</div><div class="t" style="left:65.00px;top:159.00px;font-size:12px;transform:scaleX(0.9516)">Setup</div><div class="t" style="left:65.00px;top:177.00px;font-size:12px;transform:scaleX(0.9554)">System</div><div class="t" style="left:65.00px;top:195.00px;font-size:12px;transform:scaleX(0.9536)">Forwarded Events</div><div class="t" style="left:46.00px;top:213.00px;font-size:12px;transform:scaleX(0.9711)">Applications and Services Lo</div><div class="t" style="left:46.00px;top:231.00px;font-size:12px;transform:scaleX(0.9854)">Subscriptions</div><div class="t" style="left:208.00px;top:69.50px;font-size:13px;font-weight:700;color:#ffffff;transform:scaleX(0.8725)">System</div><div class="t" style="left:264.00px;top:70.00px;font-size:12px;color:#ffffff;transform:scaleX(1.0010)">Number of events:</div><div class="t" style="left:365.00px;top:70.00px;font-size:12px;color:#ffffff;transform:scaleX(0.8795)">14 744</div><div class="t" style="left:212.00px;top:99.00px;font-size:12px;transform:scaleX(0.9357)">Level</div><div class="t" style="left:312.00px;top:99.00px;font-size:12px;transform:scaleX(0.9729)">Date and Time</div><div class="t" style="left:462.00px;top:99.00px;font-size:12px;transform:scaleX(0.9440)">Source</div><div class="t" style="left:526.00px;top:99.00px;font-size:12px;transform:scaleX(0.9473)">Event ID</div><div class="t" style="left:582.00px;top:99.00px;font-size:12px;transform:scaleX(0.9053)">Task Ca...</div><div class="t" style="left:228.00px;top:121.00px;font-size:12px;transform:scaleX(0.9208)">Error</div><div class="t" style="left:312.00px;top:121.00px;font-size:12px;transform:scaleX(0.8941)">15.04.2020 17:46:07</div><div class="t" style="left:462.00px;top:121.00px;font-size:12px;transform:scaleX(0.9884)">Distrib...</div><div class="t" style="left:540.00px;top:121.00px;font-size:12px;transform:scaleX(0.8818)">10010</div><div class="t" style="left:582.00px;top:121.00px;font-size:12px;transform:scaleX(1.0018)">None</div><div class="t" style="left:228.00px;top:140.00px;font-size:12px;transform:scaleX(1.0230)">Warning</div><div class="t" style="left:312.00px;top:140.00px;font-size:12px;transform:scaleX(0.8941)">15.04.2020 17:44:01</div><div class="t" style="left:462.00px;top:140.00px;font-size:12px;transform:scaleX(0.9884)">Distrib...</div><div class="t" style="left:540.00px;top:140.00px;font-size:12px;transform:scaleX(0.8818)">10016</div><div class="t" style="left:582.00px;top:140.00px;font-size:12px;transform:scaleX(1.0018)">None</div><div class="t" style="left:228.00px;top:159.00px;font-size:12px;transform:scaleX(1.0447)">Information</div><div class="t" style="left:312.00px;top:159.00px;font-size:12px;transform:scaleX(0.8920)">15.04.2020 17:41:23</div><div class="t" style="left:462.00px;top:159.00px;font-size:12px;transform:scaleX(0.9766)">Power-...</div><div class="t" style="left:564.00px;top:159.00px;font-size:12px;transform:scaleX(0.8160)">1</div><div class="t" style="left:582.00px;top:159.00px;font-size:12px;transform:scaleX(1.0018)">None</div><div class="t" style="left:228.00px;top:178.00px;font-size:12px;transform:scaleX(1.0447)">Information</div><div class="t" style="left:312.00px;top:178.00px;font-size:12px;transform:scaleX(0.8941)">15.04.2020 17:41:17</div><div class="t" style="left:462.00px;top:178.00px;font-size:12px;transform:scaleX(0.9613)">Kernel-...</div><div class="t" style="left:552.00px;top:178.00px;font-size:12px;transform:scaleX(0.8769)">131</div><div class="t" style="left:582.00px;top:178.00px;font-size:12px;transform:scaleX(0.9205)">(33)</div><div class="t" style="left:228.00px;top:197.00px;font-size:12px;transform:scaleX(1.0447)">Information</div><div class="t" style="left:312.00px;top:197.00px;font-size:12px;transform:scaleX(0.8941)">15.04.2020 17:41:17</div><div class="t" style="left:462.00px;top:197.00px;font-size:12px;transform:scaleX(0.9613)">Kernel-...</div><div class="t" style="left:564.00px;top:197.00px;font-size:12px;transform:scaleX(0.8160)">1</div><div class="t" style="left:582.00px;top:197.00px;font-size:12px;transform:scaleX(0.9571)">(5)</div><div class="t" style="left:228.00px;top:216.00px;font-size:12px;transform:scaleX(1.0447)">Information</div><div class="t" style="left:312.00px;top:216.00px;font-size:12px;transform:scaleX(0.8920)">15.04.2020 08:45:18</div><div class="t" style="left:462.00px;top:216.00px;font-size:12px;transform:scaleX(0.9613)">Kernel-...</div><div class="t" style="left:551.00px;top:216.00px;font-size:12px;transform:scaleX(0.9282)">107</div><div class="t" style="left:582.00px;top:216.00px;font-size:12px;transform:scaleX(0.9431)">(102)</div><div class="t" style="left:228.00px;top:235.00px;font-size:12px;transform:scaleX(1.0447)">Information</div><div class="t" style="left:312.00px;top:235.00px;font-size:12px;transform:scaleX(0.8941)">15.04.2020 17:41:17</div><div class="t" style="left:462.00px;top:235.00px;font-size:12px;transform:scaleX(0.9773)">EventL...</div><div class="t" style="left:546.00px;top:235.00px;font-size:12px;transform:scaleX(0.8800)">6013</div><div class="t" style="left:582.00px;top:235.00px;font-size:12px;transform:scaleX(1.0018)">None</div><div class="t" style="left:228.00px;top:254.00px;font-size:12px;transform:scaleX(1.0447)">Information</div><div class="t" style="left:312.00px;top:254.00px;font-size:12px;transform:scaleX(0.8920)">15.04.2020 08:45:16</div><div class="t" style="left:462.00px;top:254.00px;font-size:12px;transform:scaleX(0.9613)">Kernel-...</div><div class="t" style="left:564.00px;top:254.00px;font-size:12px;transform:scaleX(0.8160)">1</div><div class="t" style="left:582.00px;top:254.00px;font-size:12px;transform:scaleX(0.9571)">(5)</div><div class="t" style="left:228.00px;top:273.00px;font-size:12px;transform:scaleX(1.0447)">Information</div><div class="t" style="left:312.00px;top:273.00px;font-size:12px;transform:scaleX(0.8920)">15.04.2020 08:45:15</div><div class="t" style="left:462.00px;top:273.00px;font-size:12px;transform:scaleX(0.9613)">Kernel-...</div><div class="t" style="left:558.00px;top:273.00px;font-size:12px;transform:scaleX(0.8706)">42</div><div class="t" style="left:582.00px;top:273.00px;font-size:12px;transform:scaleX(0.9205)">(64)</div><div class="t" style="left:228.00px;top:292.00px;font-size:12px;transform:scaleX(1.0447)">Information</div><div class="t" style="left:312.00px;top:292.00px;font-size:12px;transform:scaleX(0.8920)">15.04.2020 08:45:16</div><div class="t" style="left:462.00px;top:292.00px;font-size:12px;transform:scaleX(0.9495)">BROW...</div><div class="t" style="left:546.00px;top:292.00px;font-size:12px;transform:scaleX(0.8800)">8033</div><div class="t" style="left:582.00px;top:292.00px;font-size:12px;transform:scaleX(1.0018)">None</div><div class="t" style="left:211.00px;top:328.00px;font-size:12px;transform:scaleX(0.9492)">Event 1, Kernel-General</div><div class="t" style="left:221.00px;top:359.00px;font-size:12px;transform:scaleX(0.9381)">General</div><div class="t" style="left:273.00px;top:357.00px;font-size:12px;transform:scaleX(0.9572)">Details</div><div class="t" style="left:242.00px;top:389.00px;font-size:12px;transform:scaleX(0.9756)">Friendly View</div><div class="t" style="left:362.00px;top:389.00px;font-size:12px;transform:scaleX(0.9626)">XML View</div><div class="t" style="left:245.00px;top:440.00px;font-size:15px;font-weight:700;transform:scaleX(1.1030)">+</div><div class="t" style="left:264.00px;top:440.00px;font-size:14.67px;font-weight:700;transform:scaleX(1.0556)">System</div><div class="t" style="left:246.00px;top:466.50px;font-size:14px;font-weight:700;transform:scaleX(1.0588)">-</div><div class="t" style="left:264.00px;top:466.50px;font-size:14.67px;font-weight:700;transform:scaleX(1.0927)">EventData</div><div class="t" style="left:277.00px;top:492.00px;font-size:14.67px;font-weight:700;transform:scaleX(1.1370)">NewTime</div><div class="t" style="left:409.00px;top:492.00px;font-size:14.67px;transform:scaleX(1.0758)">2020-04-15T15:41:17.500000000Z</div><div class="t" style="left:277.00px;top:515.00px;font-size:14.67px;font-weight:700;transform:scaleX(1.1152)">OldTime</div><div class="t" style="left:409.00px;top:515.00px;font-size:14.67px;transform:scaleX(1.0758)">2020-04-15T06:45:18.076473900Z</div><div class="t" style="left:277.00px;top:538.00px;font-size:14.67px;font-weight:700;transform:scaleX(1.0308)">Reason</div><div class="t" style="left:409.00px;top:538.00px;font-size:14.67px;transform:scaleX(1.0667)">2</div><div class="t" style="left:277.00px;top:561.00px;font-size:14.67px;font-weight:700;transform:scaleX(1.0632)">ProcessName</div><div class="t" style="left:277.00px;top:584.00px;font-size:14.67px;font-weight:700;transform:scaleX(1.0239)">ProcessID</div><div class="t" style="left:409.00px;top:584.00px;font-size:14.67px;transform:scaleX(1.1226)">4</div><div class="t" style="left:203.00px;top:659.00px;font-size:12px;transform:scaleX(0.9492)">Event 1, Kernel-General</div><div class="t" style="left:213.00px;top:688.00px;font-size:12px;transform:scaleX(0.9357)">General</div><div class="t" style="left:264.00px;top:690.00px;font-size:12px;transform:scaleX(0.9848)">Details</div><div class="t" style="left:223.00px;top:727.00px;font-size:12px;transform:scaleX(0.9775)">The system time has changed to</div><div class="t" style="left:396.00px;top:727.00px;font-size:12px;transform:scaleX(0.9136)">2020-04-15T15:41:17.500000000Z</div><div class="t" style="left:569.00px;top:727.00px;font-size:12px;transform:scaleX(1.0022)">from</div><div class="t" style="left:598.00px;top:727.00px;font-size:12px;transform:scaleX(0.9125)">2020-04-15T06:45:18.076473900Z.</div><div class="t" style="left:223.00px;top:757.00px;font-size:12px;transform:scaleX(0.9517)">Change Reason:</div><div class="t" style="left:311.00px;top:757.00px;font-size:12px;transform:scaleX(0.9937)">System time synchronized with the hardware clock.</div><div class="t" style="left:223.00px;top:772.00px;font-size:12px;transform:scaleX(0.9071)">Process:</div><div class="t" style="left:270.00px;top:772.00px;font-size:12px;transform:scaleX(0.7429)">&#x27;</div><div class="t" style="left:272.00px;top:772.00px;font-size:12px;transform:scaleX(1.2000)">&#x27;</div><div class="t" style="left:279.00px;top:772.00px;font-size:12px;transform:scaleX(0.8770)">(PID 4).</div></body></html>
